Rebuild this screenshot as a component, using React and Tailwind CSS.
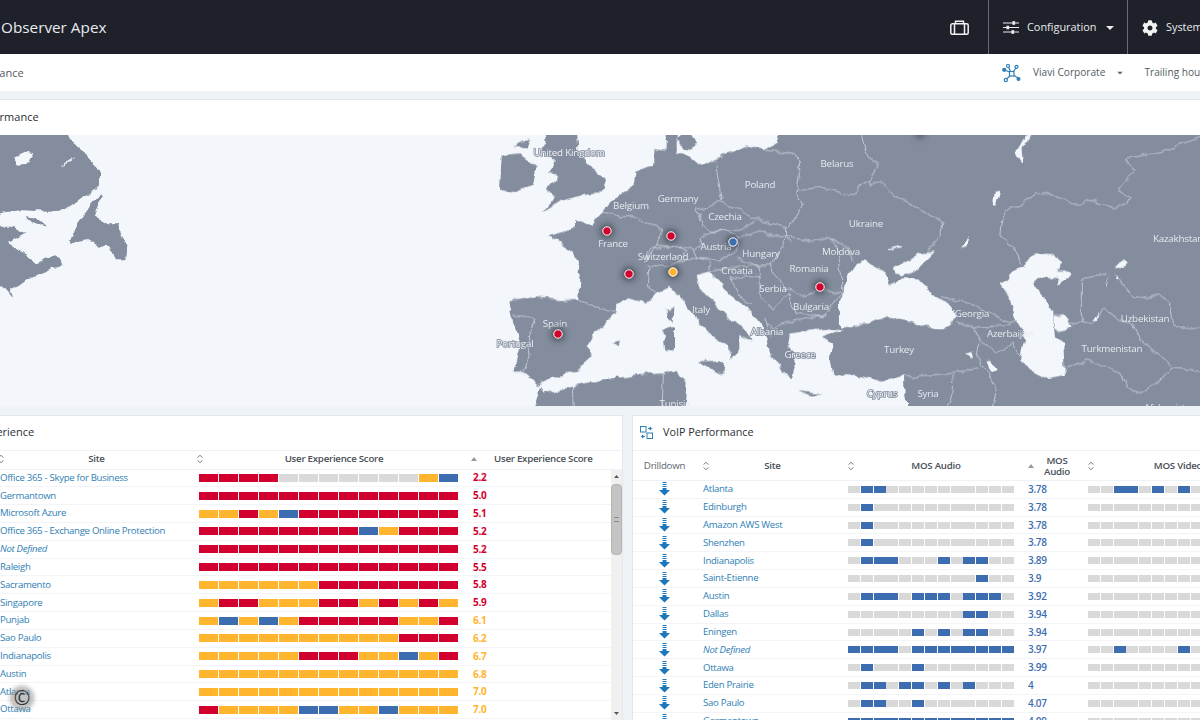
import React from 'react';
import { FaCog } from 'react-icons/fa';

const SEG = { r: 'bg-[#d2002f]', a: 'bg-[#ffb52e]', b: 'bg-[#3c6db0]', g: 'bg-[#d9d9d9]' };

const uxRows = [
    ['Office 365 - Skype for Business', 'rrrrgggggggab', '2.2'],
    ['Germantown', 'rrrrrrrrrrrrr', '5.0'],
    ['Microsoft Azure', 'aarabrrrrrrrr', '5.1'],
    ['Office 365 - Exchange Online Protection', 'rrrrrrrrbarrr', '5.2'],
    ['Not Defined', 'rrrrrrrrrrrrr', '5.2', true],
    ['Raleigh', 'rrrrrrrrrrrrr', '5.5'],
    ['Sacramento', 'aaaaaarrrrrrr', '5.8'],
    ['Singapore', 'arraaarrarara', '5.9'],
    ['Punjab', 'ababarrrrraar', '6.1'],
    ['Sao Paulo', 'aaaaaaaaaarrr', '6.2'],
    ['Indianapolis', 'aaaaarrraabar', '6.7'],
    ['Austin', 'aaaaaaaaaaaaa', '6.8'],
    ['Atlanta', 'aaaaaaaaaaaaa', '7.0'],
    ['Ottawa', 'raaaabbaabaaa', '7.0'],
];

const GRAY = 'ggggggggggggg';
const voipRows = [
    ['Atlanta', 'gbbgggggggggg', '3.78', 'ggbbgbgbggggg'],
    ['Edinburgh', 'gbggggggggggg', '3.78', GRAY],
    ['Amazon AWS West', 'gbggggggggggg', '3.78', GRAY],
    ['Shenzhen', 'gbggggggggggg', '3.78', GRAY],
    ['Indianapolis', 'gbbbgggbgbbgg', '3.89', GRAY],
    ['Saint-Etienne', 'ggggggggggbgg', '3.9', GRAY],
    ['Austin', 'gbbbgbbbgbbbg', '3.92', GRAY],
    ['Dallas', 'gggggggggbbgg', '3.94', GRAY],
    ['Eningen', 'gggggbgbgbbgg', '3.94', GRAY],
    ['Not Defined', 'bbbbgbbbbbbbb', '3.97', 'ggbggggbggggg', true],
    ['Ottawa', 'gbgggbggggggg', '3.99', GRAY],
    ['Eden Prairie', 'gbbgbbgbgbggg', '4', GRAY],
    ['Sao Paulo', 'gbbggbggggggg', '4.07', GRAY],
    ['Germantown', 'bbbbbbbbbbbbb', '4.09', GRAY],
];

const SortIcon = () => (
    <svg width="6" height="10" viewBox="0 0 6 10" fill="none" stroke="#777" strokeWidth="1" className="shrink-0">
        <path d="M.7 3.6 3 1.2l2.3 2.4M.7 6.4 3 8.8l2.3-2.4" />
    </svg>
);

const SortedIcon = () => (
    <svg width="6" height="4" viewBox="0 0 6 4" className="shrink-0">
        <path d="M3 0 6 4H0z" fill="#999" />
    </svg>
);

const Caret = ({ className }) => (
    <svg width="8" height="4" viewBox="0 0 8 4" className={className}>
        <path d="M0 0h8L4 4z" fill="currentColor" />
    </svg>
);

const Drill = () => (
    <svg width="11" height="14" viewBox="0 0 11 14" fill="#1c78bb">
        <path d="M3.5 0h4v1h-4zM3.5 2h4v1h-4zM3.5 4h4v1h-4zM3.5 6h4v2H11l-5.5 5.5L0 8h3.5z" />
    </svg>
);

const BarCells = ({ pattern, small }) => (
    <div className="flex">
        {pattern.split('').map((c, i) => (
            <div key={i} className={small ? `h-[7px] w-[11.9px] mr-[0.95px] ${SEG[c]}` : `h-2 w-[19.3px] mr-[0.7px] ${SEG[c]}`} />
        ))}
    </div>
);

const land = [
    // western europe through to the right edge of the picture
    '205,318 255,305 285,292 285,270 330,285 370,245 395,215 430,190 465,160 470,125 520,110 520,60 560,65 560,-20 590,-20 590,70 620,75 650,100 700,95 730,70 800,50 860,60 890,40 905,-20 2220,-20 2220,880 1280,880 1275,735 1210,755 1130,735 1060,730 1050,680 1060,640 1025,620 1090,598 1050,596 1000,600 930,610 925,640 950,700 935,745 905,725 895,700 870,680 860,630 845,585 800,530 745,490 715,450 685,425 650,435 660,480 700,510 745,565 800,600 815,630 775,615 775,660 755,690 750,650 700,620 660,580 620,530 570,472 530,487 500,518 440,505 412,522 410,548 345,610 320,650 335,680 290,720 215,745 175,765 130,725 100,725 120,640 95,560 85,515 150,500 240,510 295,510 300,410 270,360',
    // great britain
    '195,-20 290,-20 295,60 340,120 375,145 365,190 300,195 240,215 185,250 225,200 200,180 235,140 210,125 225,90 180,55 200,40',
    // ireland
    '60,180 65,75 120,70 170,110 160,160 90,190',
    '100,50 150,25 140,55',
    // north africa
    '150,880 180,770 190,790 280,770 400,745 480,735 550,730 590,720 605,745 620,760 610,880',
    // islands
    '590,30 620,-20 650,40 615,60',
    '660,695 735,690 730,735 700,725',
    '550,600 585,590 585,660 555,660',
    '560,540 580,530 578,578 565,575',
    '955,780 1025,790 985,795',
    '395,640 420,635 415,652',
];

const sea = [
    // black sea
    '1080,510 1110,420 1155,388 1180,405 1215,425 1230,470 1270,445 1315,445 1355,490 1420,530 1430,560 1390,595 1330,590 1280,570 1210,560 1160,580 1080,590',
    // azov
    '1245,410 1320,370 1365,365 1330,400 1305,425 1265,440 1250,430',
    // caspian
    '1670,370 1720,372 1740,400 1730,425 1770,425 1775,440 1745,455 1735,470 1735,445 1700,440 1665,450 1670,470 1700,515 1720,545 1720,570 1725,620 1750,640 1755,735 1700,745 1650,720 1620,690 1635,620 1605,570 1585,500 1562,465 1600,425 1630,410 1645,385',
    // kara-bogaz
    '1720,560 1750,550 1775,590 1750,605 1725,600',
    // rivers and lakes
    '1610,60 1635,20 1655,15 1625,55 1628,100 1610,80',
    '1443,350 1470,318 1462,345',
    '1225,355 1262,348 1262,356 1228,358',
    '1538,230 1545,185 1560,182 1548,228',
    '1455,670 1480,662 1475,682',
    '1880,470 1890,420 1878,470',
    '1900,410 1930,390 1945,400 1925,415',
    '1840,570 1855,545 1850,575',
    '1905,450 1910,435 1912,452',
    '1520,690 1530,725 1550,720 1535,690',
];

const borders = [
    '370,245 420,260 470,260 490,280 530,290 545,300 530,345 490,395',
    '530,345 580,350 640,360 665,345 660,320 735,295',
    '650,240 670,290 700,310 735,295 780,300 825,270 780,240 720,215 650,240',
    '705,95 715,150 725,210',
    '825,270 880,280 925,290',
    '930,290 965,230 950,190 960,120 945,70 860,65',
    '950,185 1020,170 1090,190 1130,190 1140,165 1165,155',
    '640,360 650,385 720,390 770,365 775,320 735,295',
    '490,395 510,355 580,350 620,365 600,395 560,410 500,405',
    '510,410 505,470 530,490',
    '600,395 640,385 690,395 690,425 770,410 830,405',
    '770,325 830,305 920,320 875,405 830,405 770,385',
    '920,320 1000,335 1040,320 1070,345 1085,440 1085,490 1040,480 960,495 920,475 880,430 875,405',
    '1040,320 1100,350 1125,395',
    '920,290 920,325 935,335',
    '830,405 840,440 790,440 750,445 790,510 820,520',
    '840,440 840,500 880,540 925,490',
    '925,490 945,550 1030,560 1085,490',
    '860,580 880,590 930,575 1040,555',
    '855,560 870,620',
    '100,555 165,565 145,620 150,680 135,725',
    '295,510 345,530 410,548',
    '1145,20 1165,85 1195,105 1165,165 1200,155 1235,190 1320,240 1390,275 1380,320 1340,365',
    '1385,500 1490,530 1550,560 1600,580 1620,570',
    '1430,575 1480,590 1550,590 1590,580',
    '1480,590 1500,630 1550,665 1600,640 1620,680',
    '2220,0 2040,65 1940,85 1965,125 1915,175 1955,200 1940,225 1900,230 1820,210 1800,230 1760,210 1700,185 1670,185 1620,230 1580,235 1565,270 1560,310 1610,370 1625,400',
    '1880,430 1807,447 1807,580 1770,580 1750,550 1720,555',
    '1807,580 1840,580 1870,535 1915,570 1960,585 1980,630 2080,715',
    '1900,430 1965,505 2040,495 2070,520 2080,580 2130,600 2220,580',
    '1760,715 1820,690 1920,730 1945,780 1990,790 2080,715 2220,725',
    '1500,640 1490,680 1550,770 1530,880',
    '1280,740 1420,730 1500,715',
    '1420,735 1415,800 1380,880',
    '550,730 545,880',
    '280,770 285,880',
];

const labels = [
    ['United Kingdom', 569, 152, true],
    ['Belarus', 837, 163],
    ['Poland', 760, 184],
    ['Germany', 678, 198],
    ['Belgium', 631, 205],
    ['Ukraine', 866, 223],
    ['Czechia', 725, 216],
    ['France', 613, 243],
    ['Austria', 716, 246],
    ['Moldova', 841, 251],
    ['Hungary', 761, 253],
    ['Switzerland', 663, 256],
    ['Romania', 809, 268],
    ['Croatia', 737, 270],
    ['Serbia', 773, 288],
    ['Bulgaria', 811, 306],
    ['Italy', 701, 309],
    ['Spain', 555, 323],
    ['Albania', 767, 331, true],
    ['Portugal', 515, 343, true],
    ['Greece', 800, 354, true],
    ['Turkey', 899, 349],
    ['Georgia', 972, 313],
    ['Azerbaijan', 1010, 333],
    ['Kazakhstan', 1178, 238],
    ['Uzbekistan', 1145, 318],
    ['Turkmenistan', 1112, 348],
    ['Cyprus', 882, 393, true],
    ['Syria', 928, 393],
    ['Tunisia', 675, 403],
    ['Afghanistan', 1170, 407],
];

const markers = [
    [607, 231, '#d2002f'],
    [671, 236, '#d2002f'],
    [733, 242, '#3c6db0'],
    [629, 274, '#d2002f'],
    [673, 272, '#ffb52e'],
    [820, 287, '#d2002f'],
    [558, 334, '#d2002f'],
];

const MapView = () => (
    <svg viewBox="0 135 1200 271" className="block w-full h-full">
        <defs>
            <filter id="glow" x="-100%" y="-100%" width="300%" height="300%">
                <feGaussianBlur stdDeviation="3" />
            </filter>
            <filter id="rough" filterUnits="userSpaceOnUse" x="-30" y="105" width="1260" height="330" colorInterpolationFilters="sRGB">
                <feTurbulence type="fractalNoise" baseFrequency="0.09" numOctaves="3" seed="4" result="noise" />
                <feDisplacementMap in="SourceGraphic" in2="noise" scale="7" xChannelSelector="R" yChannelSelector="G" />
            </filter>
        </defs>
        <rect x="0" y="135" width="1200" height="271" fill="#f3f6fa" />
        <g filter="url(#rough)">
            <g transform="scale(0.3333)" fill="#838d9e">
                <path d="M-60 350H180L215 425 255 455 262 475 300 510V560L250 590 195 630 140 635 60 630-60 650Z" />
                <path d="M300 580 270 620 240 660 225 690 208 735 240 725 265 720 300 740 320 730 345 770 380 770 382 735 360 700 355 670 320 670 285 650 305 590Z" />
                <path d="M320 665 360 695 385 735 382 775 345 775 320 730 300 740 290 680Z" />
                <path d="M-60 680H40L75 700 40 720 25 730 50 745 80 770 110 790 165 765 190 795 150 810 80 840 30 865 40 895 10 860-60 850Z" />
                <path d="M75 648 110 655 140 680 100 670Z" />
                <path d="M45 470 75 455 100 460 85 490 50 495ZM180 500 230 470 210 490Z" fill="#f3f6fa" />
            </g>
            <g transform="translate(480 130) scale(0.3333)">
                {land.map((p, i) => <polygon key={i} points={p} fill="#838d9e" />)}
                {borders.map((p, i) => (
                    <polyline key={i} points={p} fill="none" stroke="#e3e7ed" strokeWidth="2" />
                ))}
                {sea.map((p, i) => <polygon key={i} points={p} fill="#f3f6fa" />)}
            </g>
        </g>
        {labels.map(([name, x, y, halo]) => (
            <text
                key={name}
                x={x}
                y={y + 3.5}
                textAnchor="middle"
                fontSize="9.8"
                letterSpacing="-0.2"
                fontFamily="'Open Sans', sans-serif"
                fill={halo ? '#eef1f5' : '#e6e9ef'}
                stroke={halo ? '#838d9e' : 'none'}
                strokeWidth={halo ? 1.6 : 0}
                paintOrder="stroke"
            >
                {name}
            </text>
        ))}
        <circle cx="920" cy="134" r="5" fill="#333" opacity="0.5" filter="url(#glow)" />
        {markers.map(([x, y, color]) => (
            <g key={`${x}-${y}`}>
                <circle cx={x} cy={y} r="7" fill="#222" opacity="0.55" filter="url(#glow)" />
                <circle cx={x} cy={y} r="4.2" fill={color} stroke="#fff" strokeWidth="1" />
            </g>
        ))}
    </svg>
);

const App = () => {
    return (
        <div className="relative w-[1200px] h-[720px] overflow-hidden bg-[#eff3f7] font-['Open_Sans',sans-serif]">
            {/* Top bar */}
            <header className="flex items-stretch h-[54px] bg-[#1e212a] text-[#e9ebee]">
                <div className="flex items-center pl-px pt-px text-[15.3px]">Observer Apex</div>
                <div className="ml-auto flex items-stretch">
                    <div className="flex items-center w-[38px]">
                        <svg width="19" height="15" viewBox="0 0 19 15" fill="none" stroke="#f2f2f2" strokeWidth="1.5">
                            <rect x="0.8" y="3.8" width="17.4" height="10.4" rx="1.5" />
                            <path d="M5.5 3.8V1.2h8v2.6M4.5 4v10M14.5 4v10" />
                        </svg>
                    </div>
                    <div className="flex items-center w-[139px] pl-[14px] pt-px border-l border-[#686b72]">
                        <svg width="16" height="13" viewBox="0 0 16 13" stroke="#e9ebee" strokeWidth="1.2" fill="#e9ebee">
                            <path d="M0 2h16M0 6.5h16M0 11h16" />
                            <rect x="10" y="0.8" width="1.5" height="2.4" />
                            <rect x="4" y="5.3" width="1.5" height="2.4" />
                            <rect x="9" y="9.8" width="1.5" height="2.4" />
                        </svg>
                        <span className="ml-2 text-[10.9px]">Configuration</span>
                        <Caret className="ml-[10px] shrink-0 text-[#e9ebee]" />
                    </div>
                    <div className="flex items-center w-[73px] pl-[14px] pt-px border-l border-[#686b72] overflow-hidden">
                        <FaCog className="shrink-0 text-[16px] text-[#f2f2f2]" />
                        <span className="ml-2 text-[10.9px]">System</span>
                    </div>
                </div>
            </header>

            {/* Breadcrumb bar */}
            <div className="flex items-center h-[37px] pt-px bg-white text-[#555b63] text-[11px]">
                <span className="ml-[-43px]">Performance</span>
                <div className="ml-auto flex items-center w-[198px] shrink-0 whitespace-nowrap overflow-hidden text-[10.15px]">
                    <svg width="19" height="19" viewBox="0 0 19 19" fill="none" stroke="#2f80b5" strokeWidth="1.2" className="shrink-0">
                        <rect x="7.5" y="7.5" width="4.5" height="4.5" />
                        <path d="M7.5 8 3 6.2M8.5 7.5 6.5 3M11.5 7.5 14 3.5M12 11.5 16 14M8 12 4.5 15" />
                        <circle cx="2.2" cy="5.8" r="1.5" fill="#2f80b5" />
                        <circle cx="6" cy="2" r="1.5" />
                        <circle cx="14.5" cy="2.8" r="1.5" />
                        <circle cx="16.5" cy="15" r="1.4" fill="#2f80b5" />
                        <circle cx="3.8" cy="16" r="1.6" />
                    </svg>
                    <span className="ml-[12px]">Viavi Corporate</span>
                    <Caret className="ml-[11px] shrink-0 scale-75 text-[#666]" />
                    <span className="ml-[20px]">Trailing hours</span>
                </div>
            </div>

            <div className="h-2" />

            {/* Map panel */}
            <div className="flex items-center h-9 bg-white border-t border-[#dfe5ec] text-[11px] text-[#2b2f36]">
                <span className="ml-[-28px]">Performance</span>
            </div>
            <div className="h-[271px]">
                <MapView />
            </div>

            <div className="h-[9px]" />

            <div className="flex gap-[9px] w-[1300px]">
                {/* User experience table */}
                <section className="w-[623px] shrink-0 h-[305px] overflow-hidden bg-white border-t border-r border-[#e1e7ee]">
                    <div className="flex items-center h-[35px] pb-px border-b border-[#eef1f5] text-[11px] text-[#2b2f36]">
                        <span className="ml-[-49px]">User Experience</span>
                    </div>
                    <div className="grid grid-cols-[199px_274px_1fr] items-center h-[18.5px] border-b border-[#eef1f5] text-[9.7px] tracking-[-0.25px] font-semibold text-[#4a4f57]">
                        <div className="relative flex justify-center pr-[6px]">
                            <span className="absolute left-[-2px] top-[2px]"><SortIcon /></span>
                            <span>Site</span>
                        </div>
                        <div className="relative flex justify-center pr-[4px]">
                            <span className="absolute left-[-2px] top-[2px]"><SortIcon /></span>
                            <span>User Experience Score</span>
                        </div>
                        <div className="relative pl-[21px]">
                            <span className="absolute left-[-2px] top-[5px]"><SortedIcon /></span>
                            <span>User Experience Score</span>
                        </div>
                    </div>
                    <div className="flex">
                        <div className="w-[611px] shrink-0">
                            {uxRows.map(([site, bar, score, italic]) => (
                                <div key={site} className="grid grid-cols-[199px_274px_1fr] items-center h-[17.83px] border-b border-[#f2f4f7] text-[9.6px] tracking-[-0.3px]">
                                    <div className={italic ? 'italic text-[#2f80b5]' : 'text-[#2f80b5]'}>{site}</div>
                                    <BarCells pattern={bar} />
                                    <div className={parseFloat(score) < 6 ? 'text-[10px] font-bold text-[#d2002f]' : 'text-[10px] font-bold text-[#ffb52e]'}>{score}</div>
                                </div>
                            ))}
                        </div>
                        <div className="flex flex-col items-center w-[12px] h-[251px] bg-[#f0f0f0]">
                            <div className="flex items-center justify-center h-[14px]">
                                <svg width="5" height="3" viewBox="0 0 5 3"><path d="M2.5 0 5 3H0z" fill="#555" /></svg>
                            </div>
                            <div className="flex items-center justify-center w-full h-[71px] rounded-sm bg-[#c4c4c4] border border-[#b5b5b5]">
                                <div className="w-[5px] h-[5px] border-y border-[#8a8a8a]" />
                            </div>
                            <div className="flex items-center justify-center mt-auto h-[14px]">
                                <svg width="5" height="3" viewBox="0 0 5 3"><path d="M0 0h5L2.5 3z" fill="#555" /></svg>
                            </div>
                        </div>
                    </div>
                </section>

                {/* VoIP table */}
                <section className="w-[668px] shrink-0 h-[305px] overflow-hidden bg-white border-t border-l border-[#e1e7ee]">
                    <div className="flex items-center h-[35px] pb-px pl-[7px] border-b border-[#eef1f5] text-[10.8px] text-[#2b2f36]">
                        <svg width="13" height="13" viewBox="0 0 13 13" fill="none" stroke="#2f80b5" strokeWidth="1">
                            <rect x="0.5" y="0.5" width="5.5" height="5.5" />
                            <rect x="7" y="7" width="5.5" height="5.5" />
                            <path d="M8 2.5h3M9.8 1l1.5 1.5L9.8 4M5 10.5H2M3.2 9 1.7 10.5 3.2 12" strokeWidth="1.1" />
                        </svg>
                        <span className="ml-[10px]">VoIP Performance</span>
                    </div>
                    <div className="grid grid-cols-[70px_145px_180px_60px_1fr] items-center h-[30px] border-b border-[#eef1f5] text-[9.7px] tracking-[-0.25px] font-semibold text-[#4a4f57] leading-[11px]">
                        <div className="text-center font-normal text-[#5d636b] pr-[7px]">Drilldown</div>
                        <div className="relative flex justify-center pr-[6px]">
                            <span className="absolute left-0 top-[1px]"><SortIcon /></span>
                            <span>Site</span>
                        </div>
                        <div className="relative flex justify-center pr-[4px]">
                            <span className="absolute left-0 top-[1px]"><SortIcon /></span>
                            <span>MOS Audio</span>
                        </div>
                        <div className="relative text-center pr-[4px] pl-[2px]">
                            <span className="absolute left-0 top-[9px]"><SortedIcon /></span>
                            <span>MOS<br />Audio</span>
                        </div>
                        <div className="relative flex justify-center w-[180px]">
                            <span className="absolute left-0 top-[1px]"><SortIcon /></span>
                            <span>MOS Video</span>
                        </div>
                    </div>
                    {voipRows.map(([site, audio, mos, video, italic]) => (
                        <div key={site} className="grid grid-cols-[70px_145px_180px_60px_1fr] items-center h-[17.83px] border-b border-[#f2f4f7] text-[9.6px] tracking-[-0.3px]">
                            <div className="flex justify-center pr-[7px]"><Drill /></div>
                            <div className={italic ? 'italic text-[#2f80b5]' : 'text-[#2f80b5]'}>{site}</div>
                            <BarCells pattern={audio} small />
                            <div className="text-[10px] font-semibold text-[#3c6db0]">{mos}</div>
                            <BarCells pattern={video} small />
                        </div>
                    ))}
                </section>
            </div>

            {/* Copyright watermark */}
            <div className="absolute left-[12px] top-[688px] flex items-center justify-center w-5 h-5 rounded-full bg-[#9a9a9a]/60 shadow-[0_0_4px_2px_rgba(120,120,120,0.55)] text-[20px] leading-none text-[#333]">
                ©
            </div>
        </div>
    );
};

export default App;
